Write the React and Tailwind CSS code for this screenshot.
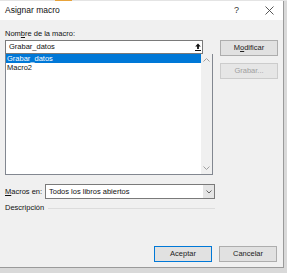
import React from "react";

const font = { fontFamily: '"Liberation Sans", Arial, sans-serif' };

function Chevron({ up }) {
  return (
    <svg width="7" height="4" viewBox="0 0 7 4" className="block">
      {up ? (
        <path d="M0.5 3.5 L3.5 0.5 L6.5 3.5" fill="none" stroke="#a0a0a0" strokeWidth="1" />
      ) : (
        <path d="M0.5 0.5 L3.5 3.5 L6.5 0.5" fill="none" stroke="#a0a0a0" strokeWidth="1" />
      )}
    </svg>
  );
}

function Btn({ children, disabled, focus }) {
  return (
    <div
      className={
        "flex h-[16px] w-[58px] items-center justify-center text-[7.5px] " +
        (disabled
          ? "border border-[#cccccc] bg-[#e6e6e6] text-[#a0a0a0]"
          : focus
          ? "border border-[#0078d7] bg-[#e1e1e1] text-[#222]"
          : "border border-[#adadad] bg-[#e1e1e1] text-[#222]")
      }
    >
      {children}
    </div>
  );
}

export default function App() {
  return (
    <div className="relative h-[273px] w-[287px] overflow-hidden bg-[#d9d9d9]" style={font}>
      <div className="flex h-[1px] bg-[#e4e4e4]">
        <div className="ml-[55px] h-[1px] w-[17px] bg-[#e8a33a]" />
      </div>
      <div className="flex h-[267px] w-[284px] flex-col border-r border-b border-[#9a9a9a] bg-[#f0f0f0]">
        {/* title bar */}
        <div className="flex h-[19px] items-center bg-white text-[8.5px] text-[#111]">
          <span className="ml-[5px]">Asignar macro</span>
          <span className="ml-auto mr-[26px] text-[9px] text-[#333]">?</span>
          <svg width="9" height="9" viewBox="0 0 9 9" className="mr-[9px]">
            <path d="M0.5 0.5 L8.5 8.5 M8.5 0.5 L0.5 8.5" stroke="#444" strokeWidth="0.9" />
          </svg>
        </div>

        <div className="flex flex-1 flex-col px-[5px] pb-[4px]">
          <div className="mt-[9px] h-[10px] text-[7.5px] leading-[10px] text-[#111]">
            Nom<span className="underline">b</span>re de la macro:
          </div>

          <div className="mt-[1px] flex">
            {/* left column */}
            <div className="flex w-[210px] flex-col">
              <div className="flex h-[14px] w-[198px] items-center border border-[#7a7a7a] bg-white">
                <span className="ml-[3px] text-[7.5px] text-[#111]">Grabar_datos</span>
                <div className="ml-auto mr-[1px] flex h-[10px] w-[7px] items-center justify-center">
                  <svg width="6" height="8" viewBox="0 0 6 8">
                    <path d="M3 0.5 L5.8 3.5 L3.9 3.5 L3.9 6 L2.1 6 L2.1 3.5 L0.2 3.5 Z" fill="#111" />
                    <rect x="0" y="7" width="6" height="1" fill="#111" />
                  </svg>
                </div>
              </div>
              <div className="flex h-[121px] border border-[#828790] border-t-0 bg-white">
                <div className="flex flex-1 flex-col pt-[0px]">
                  <div className="flex h-[9px] items-center bg-[#0078d7] pl-[1px] text-[7.5px] text-white">
                    Grabar_datos
                  </div>
                  <div className="flex h-[9px] items-center pl-[1px] text-[7.5px] text-[#111]">Macro2</div>
                </div>
                <div className="flex w-[11px] flex-col items-center justify-between bg-[#f0f0f0] py-[4px]">
                  <Chevron up />
                  <Chevron />
                </div>
              </div>
            </div>

            {/* right column */}
            <div className="ml-[7px] flex flex-col gap-[7px]">
              <Btn>
                M<span className="underline">o</span>dificar
              </Btn>
              <Btn disabled>Grabar...</Btn>
            </div>
          </div>

          <div className="mt-[9px] flex h-[15px] items-center">
            <div className="w-[40px] text-[7.5px] text-[#111]">
              <span className="underline">M</span>acros en:
            </div>
            <div className="flex h-[15px] w-[170px] items-center border border-[#7a7a7a] bg-white">
              <span className="ml-[3px] text-[7.5px] text-[#111]">Todos los libros abiertos</span>
              <div className="ml-auto flex h-full w-[11px] items-center justify-center bg-[#e5e5e5]">
                <svg width="6" height="4" viewBox="0 0 6 4">
                  <path d="M0.5 0.5 L3 3 L5.5 0.5" fill="none" stroke="#555" strokeWidth="0.9" />
                </svg>
              </div>
            </div>
          </div>

          <div className="mt-[4px] flex h-[10px] w-[210px] items-center">
            <span className="text-[7.5px] text-[#111]">Descripción</span>
            <div className="ml-[4px] h-[1px] flex-1 bg-[#dcdcdc]" />
          </div>

          <div className="mt-auto flex justify-end gap-[7px] pr-[1px] pb-[1px]">
            <Btn focus>Aceptar</Btn>
            <Btn>Cancelar</Btn>
          </div>
        </div>
      </div>
    </div>
  );
}
